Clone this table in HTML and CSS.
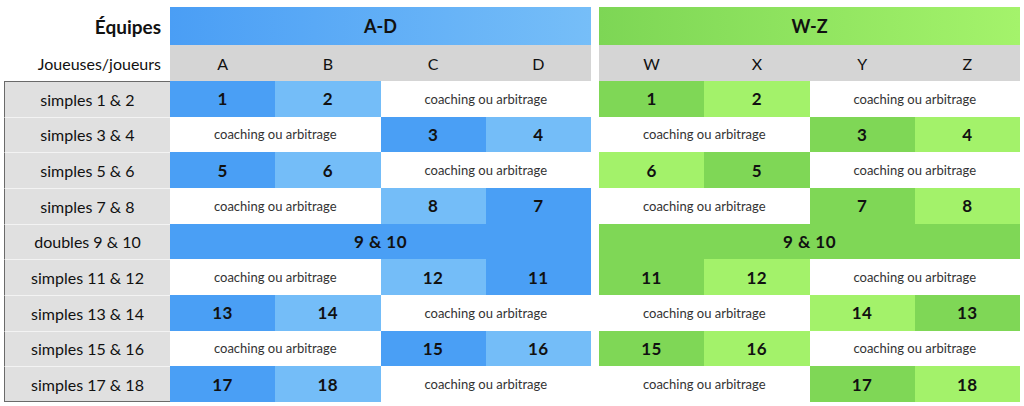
FILE: index.html
```html
<!DOCTYPE html>
<html lang="fr">
<head>
<meta charset="utf-8">
<title>Équipes</title>
<link rel="stylesheet" href="styles.css">
</head>
<body>
<div class="table">
  <div class="row r-team">
    <div class="lbl head-lbl strong">Équipes</div>
    <div class="grp team blue-grad">A-D</div>
    <div class="grp team green-grad">W-Z</div>
  </div>
  <div class="row r-players">
    <div class="lbl head-lbl">Joueuses/joueurs</div>
    <div class="grp players"><div>A</div><div>B</div><div>C</div><div>D</div></div>
    <div class="grp players"><div>W</div><div>X</div><div>Y</div><div>Z</div></div>
  </div>

  <div class="row r-data">
    <div class="lbl box first">simples 1 &amp; 2</div>
    <div class="grp"><div class="c b1">1</div><div class="c b2">2</div><div class="c co s2">coaching ou arbitrage</div></div>
    <div class="grp"><div class="c g1">1</div><div class="c g2">2</div><div class="c co s2">coaching ou arbitrage</div></div>
  </div>
  <div class="row r-data">
    <div class="lbl box">simples 3 &amp; 4</div>
    <div class="grp"><div class="c co s2">coaching ou arbitrage</div><div class="c b1">3</div><div class="c b2">4</div></div>
    <div class="grp"><div class="c co s2">coaching ou arbitrage</div><div class="c g1">3</div><div class="c g2">4</div></div>
  </div>
  <div class="row r-data">
    <div class="lbl box">simples 5 &amp; 6</div>
    <div class="grp"><div class="c b1">5</div><div class="c b2">6</div><div class="c co s2">coaching ou arbitrage</div></div>
    <div class="grp"><div class="c g2">6</div><div class="c g1">5</div><div class="c co s2">coaching ou arbitrage</div></div>
  </div>
  <div class="row r-data">
    <div class="lbl box">simples 7 &amp; 8</div>
    <div class="grp"><div class="c co s2">coaching ou arbitrage</div><div class="c b2">8</div><div class="c b1">7</div></div>
    <div class="grp"><div class="c co s2">coaching ou arbitrage</div><div class="c g1">7</div><div class="c g2">8</div></div>
  </div>
  <div class="row r-data">
    <div class="lbl box">doubles 9 &amp; 10</div>
    <div class="grp"><div class="c b1 s4">9 &amp; 10</div></div>
    <div class="grp"><div class="c g1 s4">9 &amp; 10</div></div>
  </div>
  <div class="row r-data">
    <div class="lbl box">simples 11 &amp; 12</div>
    <div class="grp"><div class="c co s2">coaching ou arbitrage</div><div class="c b2">12</div><div class="c b1">11</div></div>
    <div class="grp"><div class="c g1">11</div><div class="c g2">12</div><div class="c co s2">coaching ou arbitrage</div></div>
  </div>
  <div class="row r-data">
    <div class="lbl box">simples 13 &amp; 14</div>
    <div class="grp"><div class="c b1">13</div><div class="c b2">14</div><div class="c co s2">coaching ou arbitrage</div></div>
    <div class="grp"><div class="c co s2">coaching ou arbitrage</div><div class="c g2">14</div><div class="c g1">13</div></div>
  </div>
  <div class="row r-data">
    <div class="lbl box">simples 15 &amp; 16</div>
    <div class="grp"><div class="c co s2">coaching ou arbitrage</div><div class="c b1">15</div><div class="c b2">16</div></div>
    <div class="grp"><div class="c g1">15</div><div class="c g2">16</div><div class="c co s2">coaching ou arbitrage</div></div>
  </div>
  <div class="row r-data">
    <div class="lbl box last">simples 17 &amp; 18</div>
    <div class="grp"><div class="c b1">17</div><div class="c b2">18</div><div class="c co s2">coaching ou arbitrage</div></div>
    <div class="grp"><div class="c co s2">coaching ou arbitrage</div><div class="c g1">17</div><div class="c g2">18</div></div>
  </div>
</div>
</body>
</html>
```
FILE: styles.css
```css
html, body {
  margin: 0;
  padding: 0;
  background: #ffffff;
}
body {
  font-family: "Lato", "Open Sans", "DejaVu Sans", sans-serif;
  color: #111;
}
.table {
  padding: 7px 4px 0 4px;
  display: flex;
  flex-direction: column;
}
.row {
  display: grid;
  grid-template-columns: 166px 421px 429px;
}
.row > .grp:last-child {
  margin-left: 8px;
}
.r-team { height: 38px; }
.r-players { height: 36px; }
.r-data { height: 35.67px; }

.grp {
  display: grid;
  grid-template-columns: repeat(4, 1fr);
  height: 100%;
}
.lbl {
  display: flex;
  align-items: center;
  font-size: 16px;
  color: #111;
  box-sizing: border-box;
}
.head-lbl {
  justify-content: flex-end;
  padding-right: 9px;
}
.strong {
  font-weight: 700;
  font-size: 19px;
}
.box {
  justify-content: center;
  background: #e0e0e0;
  border-left: 1px solid #6a6a6a;
  border-top: 1px solid #f3f3f3;
}
.box.first { border-top: 1px solid #6a6a6a; }
.box.last { border-bottom: 1px solid #6a6a6a; }

.team {
  display: flex;
  align-items: center;
  justify-content: center;
  font-weight: 700;
  font-size: 18px;
}
.blue-grad { background: linear-gradient(to right, #4a9ef5, #76bef8); }
.green-grad { background: linear-gradient(to right, #7dd655, #a4f36b); }

.players {
  background: #d5d5d5;
}
.players > div {
  display: flex;
  align-items: center;
  justify-content: center;
  font-size: 16px;
}

.c {
  display: flex;
  align-items: center;
  justify-content: center;
  font-weight: 700;
  font-size: 17px;
  letter-spacing: 0.5px;
}
.s2 { grid-column: span 2; }
.s4 { grid-column: span 4; }
.co {
  font-weight: 400;
  font-size: 13px;
  color: #333;
  letter-spacing: 0;
  background: #ffffff;
}
.b1 { background: #4a9ff5; }
.b2 { background: #74bdf8; }
.g1 { background: #7fd756; }
.g2 { background: #a3f26a; }
```
